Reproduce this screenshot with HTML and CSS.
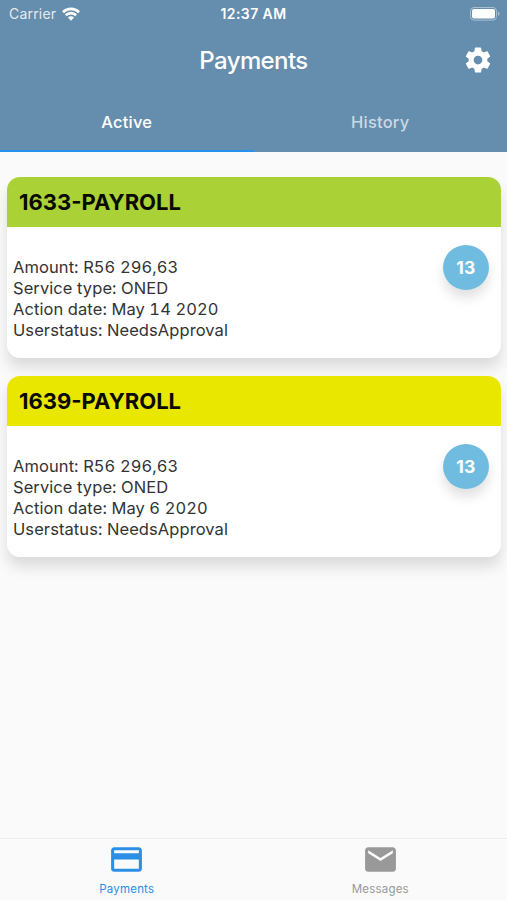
FILE: index.html
```html
<!DOCTYPE html>
<html lang="en">
<head>
    <meta charset="UTF-8">
    <meta name="viewport" content="width=device-width, initial-scale=1.0">
    <title>Payments</title>
    <link rel="stylesheet" href="styles.css">
</head>
<body>
    <header class="header">
        <div class="status-bar">
            <div class="carrier">
                <span>Carrier</span>
                <svg class="wifi" viewBox="0 0 18 14">
                    <path d="M0 4.2a12.8 12.8 0 0 1 18 0L16.2 6.2a10.2 10.2 0 0 0-14.4 0z"/>
                    <path d="M2.9 7.3a8.6 8.6 0 0 1 12.2 0L13.3 9.3a6.1 6.1 0 0 0-8.6 0z"/>
                    <path d="M5.9 10.5a4.4 4.4 0 0 1 6.2 0L9 13.8z"/>
                </svg>
            </div>
            <span class="time">12:37 AM</span>
            <svg class="battery" viewBox="0 0 30 14">
                <rect class="battery-shell" x="0.5" y="0.5" width="26" height="12.6" rx="3.5"/>
                <rect x="2" y="2" width="23" height="9.6" rx="2"/>
                <path class="battery-tip" d="M28 4.8c2 .6 2 3.4 0 4z"/>
            </svg>
        </div>
        <div class="title-bar">
            <h1>Payments</h1>
            <svg class="settings" viewBox="0 0 24 24">
                <path d="M19.43 12.98c.04-.32.07-.64.07-.98s-.03-.66-.07-.98l2.11-1.65c.19-.15.24-.42.12-.64l-2-3.46c-.12-.22-.39-.3-.61-.22l-2.49 1c-.52-.4-1.08-.73-1.69-.98l-.38-2.65C14.46 2.18 14.25 2 14 2h-4c-.25 0-.46.18-.49.42l-.38 2.65c-.61.25-1.17.59-1.69.98l-2.49-1c-.23-.09-.49 0-.61.22l-2 3.46c-.13.22-.07.49.12.64l2.11 1.65c-.04.32-.07.65-.07.98s.03.66.07.98l-2.11 1.65c-.19.15-.24.42-.12.64l2 3.46c.12.22.39.3.61.22l2.49-1c.52.4 1.08.73 1.69.98l.38 2.65c.03.24.24.42.49.42h4c.25 0 .46-.18.49-.42l.38-2.65c.61-.25 1.17-.59 1.69-.98l2.49 1c.23.09.49 0 .61-.22l2-3.46c.12-.22.07-.49-.12-.64l-2.11-1.65zM12 15.5c-1.93 0-3.5-1.57-3.5-3.5s1.57-3.5 3.5-3.5 3.5 1.57 3.5 3.5-1.57 3.5-3.5 3.5z"/>
            </svg>
        </div>
        <div class="tabs">
            <div class="tab active"><span>Active</span></div>
            <div class="tab"><span>History</span></div>
        </div>
    </header>

    <main class="content">
        <div class="card">
            <h2 class="green">1633-PAYROLL</h2>
            <div class="card-body">
                <div class="details">
                    <p>Amount: R56 296,63</p>
                    <p>Service type: ONED</p>
                    <p>Action date: May 14 2020</p>
                    <p>Userstatus: NeedsApproval</p>
                </div>
                <div class="count">13</div>
            </div>
        </div>
        <div class="card">
            <h2 class="yellow">1639-PAYROLL</h2>
            <div class="card-body">
                <div class="details">
                    <p>Amount: R56 296,63</p>
                    <p>Service type: ONED</p>
                    <p>Action date: May 6 2020</p>
                    <p>Userstatus: NeedsApproval</p>
                </div>
                <div class="count">13</div>
            </div>
        </div>
    </main>

    <nav class="bottom-nav">
        <div class="nav-item active">
            <svg viewBox="0 0 24 24">
                <path d="M20 4H4c-1.11 0-1.99.89-1.99 2L2 18c0 1.11.89 2 2 2h16c1.11 0 2-.89 2-2V6c0-1.11-.89-2-2-2zm0 14H4v-6h16v6zm0-10H4V6h16v2z"/>
            </svg>
            <span>Payments</span>
        </div>
        <div class="nav-item">
            <svg viewBox="0 0 24 24">
                <path d="M20 4H4c-1.1 0-1.99.9-1.99 2L2 18c0 1.1.9 2 2 2h16c1.1 0 2-.9 2-2V6c0-1.1-.9-2-2-2zm0 4l-8 5-8-5V6l8 5 8-5v2z"/>
            </svg>
            <span>Messages</span>
        </div>
    </nav>
</body>
</html>
```
FILE: styles.css
```css
* {
    box-sizing: border-box;
}
body {
    font-family: Inter, 'Liberation Sans', sans-serif;
    margin: 0;
    height: 900px;
    display: flex;
    flex-direction: column;
    background-color: #fafafa;
    color: #333;
    overflow: hidden;
}
h1, h2, p {
    margin: 0;
}
.header {
    height: 152px;
    background-color: #658dad;
    color: white;
}
.status-bar {
    display: grid;
    grid-template-columns: 1fr auto 1fr;
    align-items: center;
    height: 27px;
    padding: 0 7px 0 9px;
    font-size: 14px;
}
.carrier {
    display: flex;
    align-items: center;
    gap: 6px;
    color: #e3ebf1;
    letter-spacing: 0.2px;
}
.wifi {
    width: 18px;
    height: 14px;
    fill: white;
}
.time {
    margin-right: 2px;
    font-weight: 600;
    letter-spacing: 0.4px;
}
.battery {
    width: 30px;
    height: 14px;
    justify-self: end;
    fill: white;
}
.battery-shell {
    fill: none;
    stroke: #a9c0d2;
}
.battery-tip {
    fill: #a9c0d2;
}
.title-bar {
    display: grid;
    grid-template-columns: 1fr auto 1fr;
    align-items: center;
    height: 66px;
    padding: 0 14px;
}
.title-bar h1 {
    grid-column: 2;
    font-size: 24px;
    font-weight: 500;
    letter-spacing: -0.6px;
}
.settings {
    width: 30px;
    height: 30px;
    justify-self: end;
    fill: white;
}
.tabs {
    display: flex;
    height: 59px;
}
.tab {
    flex: 1;
    display: flex;
    align-items: center;
    justify-content: center;
    font-size: 16.5px;
    font-weight: 500;
    letter-spacing: 0.2px;
    color: #cbd9e4;
    border-bottom: 2px solid transparent;
}
.tab.active {
    color: white;
    border-bottom-color: #2590ee;
}
.content {
    flex: 1;
    display: flex;
    flex-direction: column;
    gap: 18px;
    padding: 25px 6px 0 7px;
}
.card {
    height: 181px;
    background: white;
    border-radius: 13px;
    box-shadow: 0 10px 14px rgba(0, 0, 0, 0.12);
}
.card h2 {
    height: 50px;
    padding-left: 12px;
    border-radius: 13px 13px 0 0;
    font-size: 22px;
    font-weight: 700;
    line-height: 50px;
    color: #0a0a00;
}
.green {
    background-color: #aad136;
}
.yellow {
    background-color: #e9e600;
}
.card-body {
    display: flex;
    justify-content: space-between;
    padding: 18px 12px 0 6px;
}
.details {
    padding-top: 12px;
    font-size: 16.5px;
    font-variant-numeric: tabular-nums;
    line-height: 21px;
    letter-spacing: 0.08px;
}
.count {
    width: 46px;
    height: 45px;
    border-radius: 50%;
    background-color: #70bce0;
    box-shadow: 0 8px 12px rgba(0, 0, 0, 0.12);
    color: white;
    font-size: 17.5px;
    font-weight: 700;
    line-height: 45px;
    letter-spacing: 0.3px;
    text-align: center;
}
.bottom-nav {
    display: flex;
    height: 62px;
    border-top: 1px solid #eee;
}
.nav-item {
    flex: 1;
    display: flex;
    flex-direction: column;
    align-items: center;
    padding-top: 2px;
    color: #999;
    font-size: 11.5px;
    letter-spacing: 0.2px;
}
.nav-item svg {
    width: 37px;
    height: 37px;
    fill: currentColor;
}
.nav-item span {
    margin-top: 4px;
    line-height: 14px;
}
.nav-item.active {
    color: #2b90e5;
}
```
